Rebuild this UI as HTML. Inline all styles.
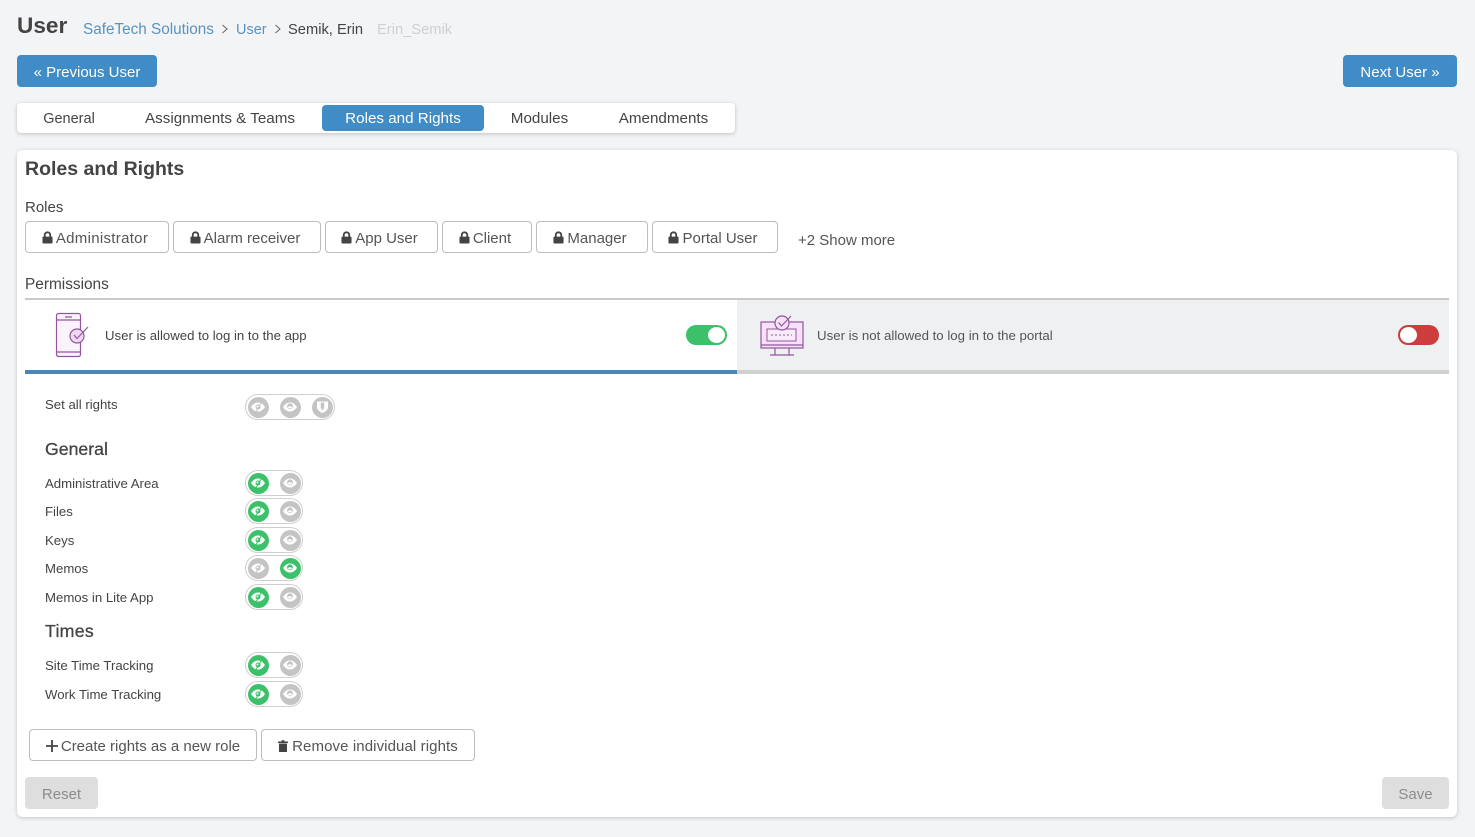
<!DOCTYPE html>
<html lang="en"><head><meta charset="utf-8"><title>User</title>
<style>
html,body{margin:0;padding:0}
body{width:1475px;height:837px;background:#f3f4f6;position:relative;overflow:hidden;font-family:"Liberation Sans",sans-serif;color:#444;font-size:15px}
.a{position:absolute;white-space:nowrap}
.btn{position:absolute;box-sizing:border-box;background:#3f8cc6;color:#fff;border-radius:4px;height:32px;line-height:36px;text-align:center;font-size:15px;white-space:nowrap}
.o{position:absolute;box-sizing:border-box;background:#fff;border:1px solid #bdbdbd;border-radius:4px;height:32px;line-height:33px;text-align:center;color:#555;font-size:15px;white-space:nowrap}
.r{padding-right:4px}
.o svg{vertical-align:-1px;margin-right:3px}
.tab{position:absolute;top:105px;height:26px;line-height:27px;text-align:center;font-size:15.200px;color:#444;white-space:nowrap}
.l{position:absolute;left:45px;font-size:13.200px;color:#444;white-space:nowrap;line-height:16px}
.h{position:absolute;left:45px;font-size:17.700px;color:#444;line-height:22px;-webkit-text-stroke:.3px #444}
.sw{position:absolute;left:245px;box-sizing:border-box;width:58px;height:26px;border:1px solid #cfcfcf;border-radius:13px;background:#fff}
.d{position:absolute;top:1.500px;width:21px;height:21px;border-radius:50%;background:#c4c4c4}
.d svg{position:absolute;left:2.500px;top:3.500px}
.g{background:#3cc16a}
</style></head><body>
<svg width="0" height="0" style="position:absolute"><defs>
<symbol id="es" viewBox="0 0 16 14"><path d="M1 7C3.200 3.700 5.600 2.500 8 2.500s4.800 1.200 7 4.500c-2.200 3.300-4.600 4.500-7 4.500S3.200 10.300 1 7z" fill="#fff"/><circle cx="8" cy="7" r="2.500" fill="currentColor"/><circle cx="7.500" cy="6.500" r="1" fill="#fff"/><path d="M12 1.500L5.500 12.500" stroke="currentColor" stroke-width="1"/></symbol>
<symbol id="e" viewBox="0 0 16 14"><path d="M1 7C3.200 3.700 5.600 2.500 8 2.500s4.800 1.200 7 4.500c-2.200 3.300-4.600 4.500-7 4.500S3.200 10.300 1 7z" fill="#fff"/><circle cx="8" cy="6.300" r="2.900" fill="currentColor"/><ellipse cx="8" cy="7.400" rx="2" ry="1.100" fill="#fff"/></symbol>
<symbol id="lock" viewBox="0 0 12 14"><path d="M3 6.500V4.300a3 3 0 0 1 6 0V6.500" fill="none" stroke="#444" stroke-width="2"/><rect x="0.500" y="6" width="11" height="7.500" rx="1" fill="#444"/></symbol>
</defs></svg>

<div class="a" style="left:17px;top:12px;font-size:22.600px;font-weight:700;color:#444;line-height:28px">User</div>
<div class="a" style="left:83px;top:21px;font-size:15.300px;line-height:18px;color:#5a93bd">SafeTech Solutions</div>
<svg class="a" style="left:221px;top:24px" width="8" height="10" viewBox="0 0 8 10"><path d="M1.500 1l4.500 4-4.500 4" fill="none" stroke="#666" stroke-width="1"/></svg>
<div class="a" style="left:236px;top:21px;font-size:14.500px;line-height:18px;color:#5a93bd">User</div>
<svg class="a" style="left:274px;top:24px" width="8" height="10" viewBox="0 0 8 10"><path d="M1.500 1l4.500 4-4.500 4" fill="none" stroke="#666" stroke-width="1"/></svg>
<div class="a" style="left:288px;top:21px;font-size:14.700px;line-height:18px;color:#444">Semik, Erin</div>
<div class="a" style="left:377px;top:21px;font-size:14.700px;line-height:18px;color:#ccd0d4">Erin_Semik</div>

<div class="btn" style="left:17px;top:55px;width:140px">« Previous User</div>
<div class="btn" style="left:1343px;top:55px;width:114px">Next User »</div>

<div class="a" style="left:17px;top:103px;width:718px;height:30px;background:#fff;border-radius:4px;box-shadow:0 1px 4px rgba(0,0,0,.22)"></div>
<div class="tab" style="left:17px;width:104px;font-size:14.500px;line-height:28px">General</div>
<div class="tab" style="left:125px;width:190px">Assignments &amp; Teams</div>
<div class="tab" style="left:322px;width:162px;background:#3f8cc6;color:#fff;border-radius:4px">Roles and Rights</div>
<div class="tab" style="left:490px;width:99px">Modules</div>
<div class="tab" style="left:598px;width:131px">Amendments</div>

<div class="a" style="left:17px;top:150px;width:1440px;height:667px;background:#fff;border-radius:6px;box-shadow:0 1px 4px rgba(0,0,0,.2)"></div>
<div class="a" style="left:25px;top:156px;font-size:19.500px;font-weight:700;color:#444;line-height:26px">Roles and Rights</div>
<div class="a" style="left:25px;top:199px;font-size:15px;line-height:18px;color:#444">Roles</div>

<div class="o r" style="left:25px;top:221px;width:144px;letter-spacing:.3px"><svg width="11" height="13"><use href="#lock"/></svg>Administrator</div>
<div class="o r" style="left:173px;top:221px;width:148px"><svg width="11" height="13"><use href="#lock"/></svg>Alarm receiver</div>
<div class="o r" style="left:325px;top:221px;width:113px"><svg width="11" height="13"><use href="#lock"/></svg>App User</div>
<div class="o r" style="left:442px;top:221px;width:90px"><svg width="11" height="13"><use href="#lock"/></svg>Client</div>
<div class="o r" style="left:536px;top:221px;width:112px"><svg width="11" height="13"><use href="#lock"/></svg>Manager</div>
<div class="o r" style="left:652px;top:221px;width:126px"><svg width="11" height="13"><use href="#lock"/></svg>Portal User</div>
<div class="a" style="left:798px;top:232px;font-size:15px;line-height:18px;color:#555">+2 Show more</div>

<div class="a" style="left:25px;top:276px;font-size:15.400px;line-height:18px;color:#444">Permissions</div>

<div class="a" style="left:25px;top:298px;width:712px;height:2px;background:#c9c9c9"></div>
<div class="a" style="left:25px;top:370px;width:712px;height:4px;background:#4a86b8"></div>
<div class="a" style="left:737px;top:298px;width:712px;height:76px;box-sizing:border-box;background:#eff0f2;border-top:2px solid #c9c9c9;border-bottom:4px solid #cfd0d0"></div>

<svg class="a" style="left:54px;top:312px" width="36" height="46" viewBox="0 0 36 46">
<rect x="2.500" y="1.500" width="24" height="43" rx="2" fill="#fbf3fc" stroke="#92569d" stroke-width="1.200"/>
<path d="M2.500 8h24M2.500 40h24M11 5h7" fill="none" stroke="#92569d" stroke-width="1.200"/>
<circle cx="23" cy="24" r="7" fill="#efd9f2" stroke="#92569d" stroke-width="1.200"/>
<path d="M20 23l3 3.500L34 15" fill="none" stroke="#92569d" stroke-width="1.200"/>
</svg>
<div class="a" style="left:105px;top:328px;font-size:13.200px;line-height:16px;color:#444">User is allowed to log in to the app</div>
<div class="a" style="left:686px;top:325px;width:41px;height:20px;border-radius:10px;background:#3cc16a"></div>
<div class="a" style="left:708px;top:327px;width:17px;height:16px;border-radius:50%;background:#fff"></div>

<svg class="a" style="left:759px;top:314px" width="46" height="44" viewBox="0 0 46 44">
<rect x="2" y="8" width="42" height="26" fill="#f6e0fa" stroke="#92569d" stroke-width="1.200"/>
<path d="M2 31h42M16 34v7M30 34v7M11 41h24" fill="none" stroke="#92569d" stroke-width="1.200"/>
<rect x="8" y="15" width="29" height="12" fill="#f8ecfb" stroke="#92569d" stroke-width="1"/>
<path d="M12 21h21" stroke="#92569d" stroke-dasharray="2 2" stroke-width="1"/>
<circle cx="23" cy="9" r="7" fill="#f6e0fa" stroke="#92569d" stroke-width="1.200"/>
<path d="M19.500 8.500l3 3.500L32 2" fill="none" stroke="#92569d" stroke-width="1.200"/>
</svg>
<div class="a" style="left:817px;top:328px;font-size:13.250px;line-height:16px;color:#555">User is not allowed to log in to the portal</div>
<div class="a" style="left:1398px;top:325px;width:41px;height:20px;border-radius:10px;background:#cc3d3d"></div>
<div class="a" style="left:1400px;top:327px;width:17px;height:16px;border-radius:50%;background:#fff"></div>

<div class="l" style="top:397px">Set all rights</div>
<div class="sw" style="top:394px;width:90px"><div class="d" style="left:1.500px;color:#c4c4c4"><svg width="16" height="14"><use href="#es"/></svg></div><div class="d" style="left:33.500px;color:#c4c4c4"><svg width="16" height="14"><use href="#e"/></svg></div><div class="d" style="left:65.500px"><svg style="left:4px;top:3.500px" width="13" height="14" viewBox="0 0 13 14"><path d="M1 1.500h11V7c0 3-3 5-5.500 6C4 12 1 10 1 7z" fill="#fff"/><path d="M4.800 2.500h3.400V8L6.500 10.500 4.800 8z" fill="#c4c4c4"/></svg></div></div>

<div class="h" style="top:438px">General</div>

<div class="l" style="top:476px">Administrative Area</div>
<div class="sw" style="top:470px"><div class="d g" style="left:1.500px;color:#3cc16a"><svg width="16" height="14"><use href="#es"/></svg></div><div class="d" style="left:33.500px;color:#c4c4c4"><svg width="16" height="14"><use href="#e"/></svg></div></div>
<div class="l" style="top:504px">Files</div>
<div class="sw" style="top:498px"><div class="d g" style="left:1.500px;color:#3cc16a"><svg width="16" height="14"><use href="#es"/></svg></div><div class="d" style="left:33.500px;color:#c4c4c4"><svg width="16" height="14"><use href="#e"/></svg></div></div>
<div class="l" style="top:533px">Keys</div>
<div class="sw" style="top:527px"><div class="d g" style="left:1.500px;color:#3cc16a"><svg width="16" height="14"><use href="#es"/></svg></div><div class="d" style="left:33.500px;color:#c4c4c4"><svg width="16" height="14"><use href="#e"/></svg></div></div>
<div class="l" style="top:561px">Memos</div>
<div class="sw" style="top:555px"><div class="d" style="left:1.500px;color:#c4c4c4"><svg width="16" height="14"><use href="#es"/></svg></div><div class="d g" style="left:33.500px;color:#3cc16a"><svg width="16" height="14"><use href="#e"/></svg></div></div>
<div class="l" style="top:590px">Memos in Lite App</div>
<div class="sw" style="top:584px"><div class="d g" style="left:1.500px;color:#3cc16a"><svg width="16" height="14"><use href="#es"/></svg></div><div class="d" style="left:33.500px;color:#c4c4c4"><svg width="16" height="14"><use href="#e"/></svg></div></div>

<div class="h" style="top:620px;letter-spacing:.3px">Times</div>

<div class="l" style="top:658px">Site Time Tracking</div>
<div class="sw" style="top:652px"><div class="d g" style="left:1.500px;color:#3cc16a"><svg width="16" height="14"><use href="#es"/></svg></div><div class="d" style="left:33.500px;color:#c4c4c4"><svg width="16" height="14"><use href="#e"/></svg></div></div>
<div class="l" style="top:687px">Work Time Tracking</div>
<div class="sw" style="top:681px"><div class="d g" style="left:1.500px;color:#3cc16a"><svg width="16" height="14"><use href="#es"/></svg></div><div class="d" style="left:33.500px;color:#c4c4c4"><svg width="16" height="14"><use href="#e"/></svg></div></div>

<div class="o" style="left:29px;top:729px;width:228px"><svg width="12" height="12" viewBox="0 0 12 12"><path d="M6 0v12M0 6h12" stroke="#444" stroke-width="1.800"/></svg>Create rights as a new role</div>
<div class="o" style="left:261px;top:729px;width:214px;letter-spacing:.1px"><svg width="10" height="12" viewBox="0 0 10 12" style="margin-right:4px"><path d="M0 1.500h10v1.500H0zM3.500.3h3v1.500h-3zM1 3.500h8V12H1z" fill="#444"/></svg>Remove individual rights</div>

<div class="btn" style="left:25px;top:777px;width:73px;background:#dedede;color:#8c8c8c">Reset</div>
<div class="btn" style="left:1382px;top:777px;width:67px;background:#dedede;color:#8c8c8c">Save</div>
</body></html>
